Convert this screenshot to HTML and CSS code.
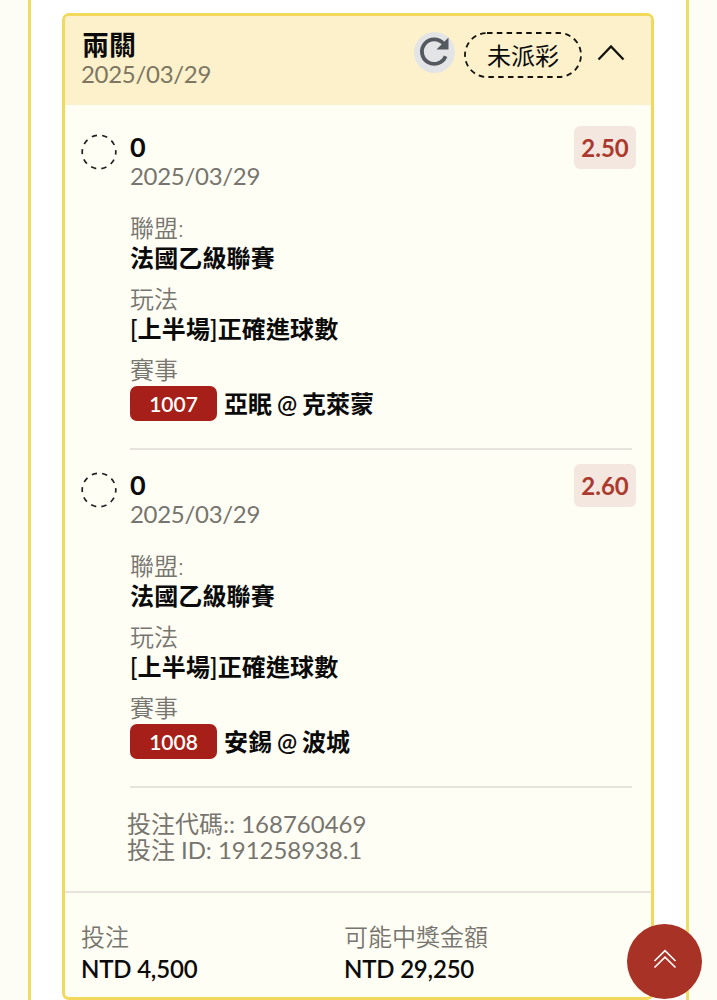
FILE: index.html
```html
<!DOCTYPE html>
<html lang="zh-Hant">
<head>
<meta charset="utf-8">
<title>投注紀錄</title>
<link rel="stylesheet" href="styles.css">
</head>
<body>
<main class="panel">
  <article class="card">
    <header class="card-head">
      <div class="head-text">
        <div class="title">兩關</div>
        <div class="date">2025/03/29</div>
      </div>
      <div class="head-actions">
        <span class="refresh"><svg width="41" height="41" viewBox="0 0 41 41"><path d="M31.6 24.3A12.3 12.3 0 1 1 29.5 11.5" fill="none" stroke="#54585f" stroke-width="3.8"/><path d="M34.5 5.5V17.5H22.5Z" fill="#54585f"/></svg></span>
        <span class="status"><svg class="status-line" width="118" height="46" viewBox="0 0 118 46"><rect x="1" y="1" width="116" height="44" rx="22" fill="none" stroke="#15130c" stroke-width="1.8" stroke-dasharray="5.5 4.3"/></svg>未派彩</span>
        <svg class="chevron" width="28" height="18" viewBox="0 0 28 18"><path d="M1.5 15.5L14 2.5L26.5 15.5" fill="none" stroke="#15130c" stroke-width="2.3"/></svg>
      </div>
    </header>
    <section class="leg">
      <svg class="ring" width="36" height="36" viewBox="0 0 36 36"><circle cx="18" cy="18" r="16.8" fill="none" stroke="#222" stroke-width="1.7" stroke-dasharray="5.3 5.256" stroke-dashoffset="2.6"/></svg>
      <div class="leg-body">
        <div class="leg-top">
          <div><div class="score">0</div><div class="date">2025/03/29</div></div>
          <span class="odds">2.50</span>
        </div>
        <dl class="facts">
          <dt>聯盟:</dt><dd>法國乙級聯賽</dd>
          <dt>玩法</dt><dd>[上半場]正確進球數</dd>
          <dt>賽事</dt><dd class="match"><span class="code">1007</span><span class="teams">亞眠 @ 克萊蒙</span></dd>
        </dl>
      </div>
    </section>
    <section class="leg">
      <svg class="ring" width="36" height="36" viewBox="0 0 36 36"><circle cx="18" cy="18" r="16.8" fill="none" stroke="#222" stroke-width="1.7" stroke-dasharray="5.3 5.256" stroke-dashoffset="2.6"/></svg>
      <div class="leg-body">
        <div class="leg-top">
          <div><div class="score">0</div><div class="date">2025/03/29</div></div>
          <span class="odds">2.60</span>
        </div>
        <dl class="facts">
          <dt>聯盟:</dt><dd>法國乙級聯賽</dd>
          <dt>玩法</dt><dd>[上半場]正確進球數</dd>
          <dt>賽事</dt><dd class="match"><span class="code">1008</span><span class="teams">安錫 @ 波城</span></dd>
        </dl>
      </div>
    </section>
    <section class="ids">
      <div>投注代碼:: 168760469</div>
      <div class="bet-id">投注 ID: 191258938.1</div>
    </section>
    <footer class="totals">
      <div><div class="label">投注</div><div class="amount">NTD 4,500</div></div>
      <div><div class="label">可能中獎金額</div><div class="amount">NTD 29,250</div></div>
    </footer>
  </article>
</main>
<button class="to-top" aria-label="回頂端"><svg width="24" height="20" viewBox="0 0 24 20"><path d="M1.5 12L12 1.7L22.5 12M1.5 18.5L12 8.2L22.5 18.5" fill="none" stroke="#fff" stroke-width="1.6"/></svg></button>
</body>
</html>
```
FILE: styles.css
```css
* { box-sizing: border-box; }
body {
  margin: 0;
  height: 1000px;
  overflow: hidden;
  background: #fefdf5;
  font: 24px/29px Lato, "Noto Sans CJK TC", sans-serif;
  color: #0b0b0b;
}
svg { display: block; flex: none; }
.panel {
  width: 661px;
  height: 1000px;
  margin-left: 28px;
  padding: 13px 32px 0 31px;
  background: #fff;
  border: solid #f1dc62;
  border-width: 0 3px;
}
.card {
  height: 987px;
  background: #fffef5;
  border: 3px solid #f2d95c;
  border-radius: 7px;
  overflow: hidden;
}
.card-head {
  display: flex;
  justify-content: space-between;
  height: 89px;
  padding: 14px 26px 0 17px;
  background: #fcf1cb;
}
.title { font-size: 27px; font-weight: 700; }
.date { color: #77756f; letter-spacing: -0.3px; }
.card-head .date { margin-left: -1px; color: #7d7663; }
.head-actions { display: flex; align-items: flex-start; }
.refresh {
  width: 41px;
  height: 41px;
  margin: 2px 9px 0 0;
  border-radius: 50%;
  background: #e3e4e6;
}
.status {
  position: relative;
  width: 118px;
  height: 46px;
  margin: 2px 15px 0 0;
  line-height: 48px;
  text-align: center;
}
.status-line { position: absolute; inset: 0; }
.chevron { margin-top: 14px; }
.leg { display: flex; height: 338px; padding: 20px 15px 0 16px; }
.card-head + .leg { margin-top: 7px; }
.ring { margin: 2px 13px 0 0; }
.leg-body { flex: 1; height: 318px; }
.leg-body::after {
  content: "";
  display: block;
  width: 502px;
  height: 2px;
  margin-top: 28px;
  background: #e6e4dd;
}
.leg-top { display: flex; justify-content: space-between; height: 81px; }
.score { font-size: 27px; font-weight: 700; }
.odds {
  width: 62px;
  height: 43px;
  margin-top: -6px;
  border-radius: 6px;
  background: #f4e7e0;
  color: #ab3a2e;
  font-weight: 700;
  line-height: 44px;
  text-align: center;
}
.facts { margin: 0; }
.facts dt { color: #77756f; font-weight: 350; }
.facts dd { margin: 0 0 12px; height: 30px; line-height: 31px; font-weight: 600; letter-spacing: 0.15px; }
.facts .match { display: flex; gap: 7px; height: 35px; margin: 2px 0 0; letter-spacing: 0; }
.facts .match { margin-bottom: -1px; }
.code {
  width: 87px;
  height: 35px;
  border-radius: 7px;
  background: #a62019;
  color: #fff;
  font-size: 21px;
  line-height: 35px;
  text-align: center;
}
.teams { line-height: 36px; word-spacing: -1px; }
.ids { height: 103px; padding: 23px 0 0 62px; color: #77756f; font-weight: 400; line-height: 26px; }
.bet-id { letter-spacing: -0.05px; }
.totals {
  display: grid;
  grid-template-columns: 263px 1fr;
  padding: 29px 0 0 16px;
  border-top: 2px solid #e6e4dd;
}
.label { color: #77756f; font-weight: 350; }
.amount { margin-top: 3px; font-weight: 600; letter-spacing: -0.2px; }
.to-top {
  position: fixed;
  left: 627px;
  top: 924px;
  width: 75px;
  height: 75px;
  padding: 0;
  display: grid;
  place-items: center;
  border: 0;
  border-radius: 50%;
  background: #a93226;
}
.to-top svg { margin: -6px 0 0 1px; }
```
